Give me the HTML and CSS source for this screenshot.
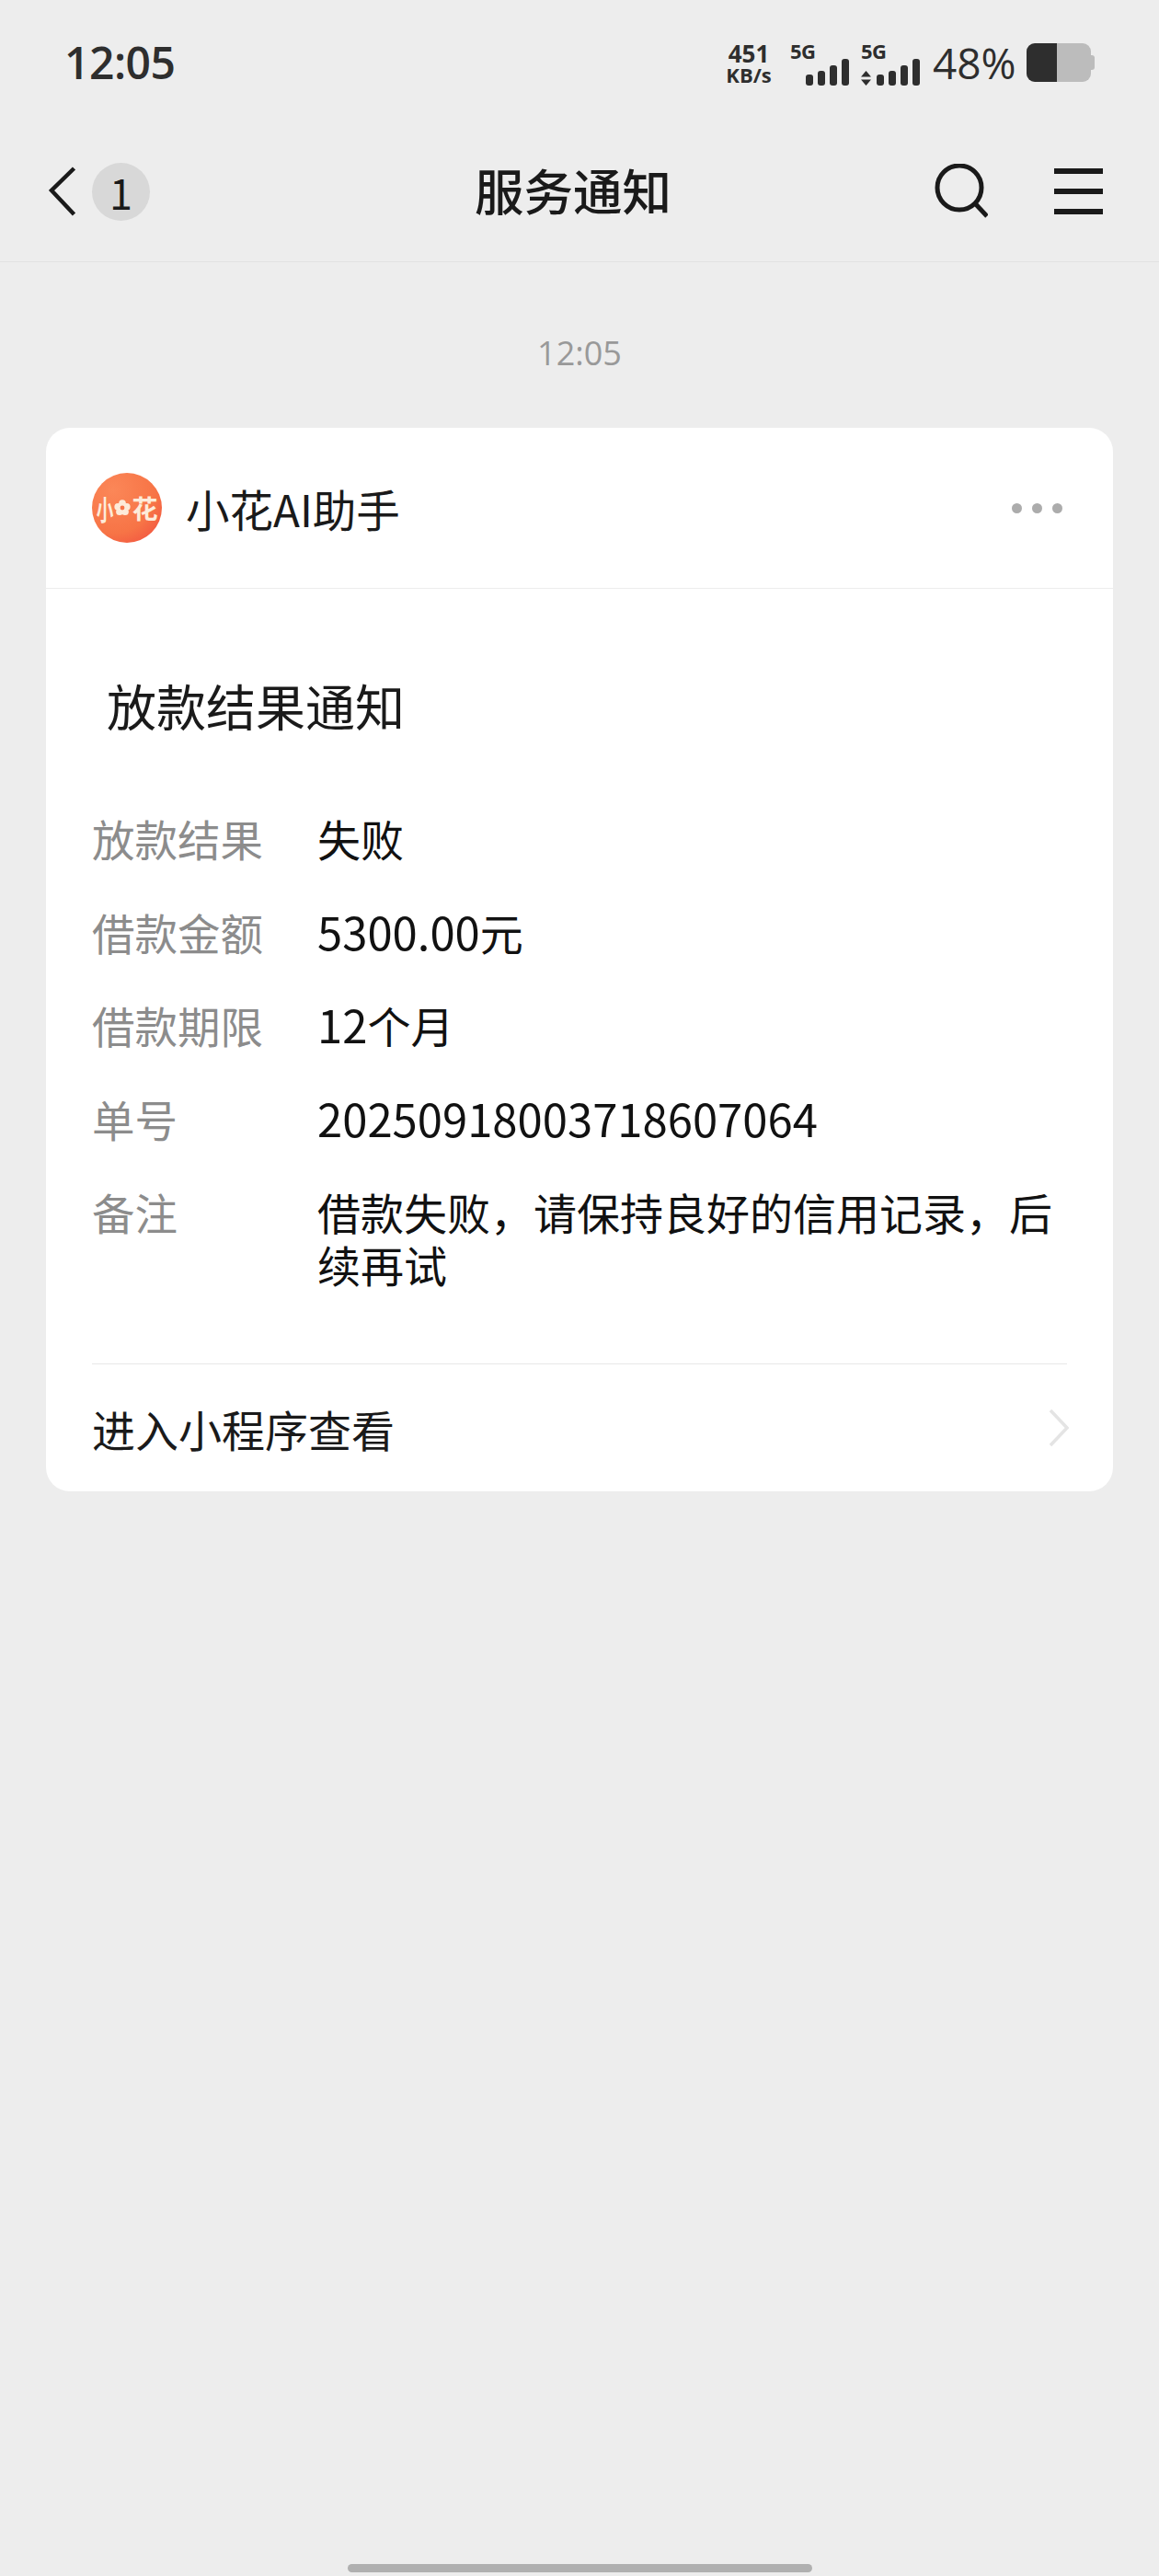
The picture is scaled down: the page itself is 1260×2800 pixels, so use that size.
FILE: index.html
```html
<!DOCTYPE html>
<html lang="zh-CN">
<head>
  <meta charset="UTF-8">
  <meta name="viewport" content="width=device-width, initial-scale=1.0">
  <title>服务通知</title>
  <link rel="stylesheet" href="styles.css">
</head>
<body>
  <div class="status-bar">
    <div class="status-time">12:05</div>
    <div class="status-right">
      <div class="net-speed">
        <div class="net-value">451</div>
        <div class="net-unit">KB/s</div>
      </div>
      <div class="signal">
        <div class="signal-label">5G</div>
        <div class="signal-row">
          <div class="bars">
            <span class="bar bar-1"></span>
            <span class="bar bar-2"></span>
            <span class="bar bar-3"></span>
            <span class="bar bar-4"></span>
          </div>
        </div>
      </div>
      <div class="signal signal-data">
        <div class="signal-label">5G</div>
        <div class="signal-row">
          <svg class="updown" width="11" height="16" viewBox="0 0 11 16"><path d="M5.5 0L11 6.5H0ZM0 9.500H11L5.5 16Z" fill="#2e2e2e"/></svg>
          <div class="bars">
            <span class="bar bar-1"></span>
            <span class="bar bar-2"></span>
            <span class="bar bar-3"></span>
            <span class="bar bar-4"></span>
          </div>
        </div>
      </div>
      <div class="battery-text">48%</div>
      <div class="battery">
        <div class="battery-body"><div class="battery-level"></div></div>
        <div class="battery-nub"></div>
      </div>
    </div>
  </div>

  <div class="nav">
    <div class="nav-left">
      <svg class="back-icon" width="30" height="54" viewBox="0 0 30 54"><path d="M27.500 2L3 26L27.500 52" fill="none" stroke="#1a1a1a" stroke-width="4.500"/></svg>
      <div class="badge">1</div>
    </div>
    <div class="nav-title">服务通知</div>
    <div class="nav-right">
      <svg class="search-icon" width="58" height="60" viewBox="0 0 58 60"><circle cx="27" cy="26" r="24" fill="none" stroke="#1a1a1a" stroke-width="5"/><path d="M43 42L57 57" fill="none" stroke="#1a1a1a" stroke-width="5"/></svg>
      <div class="menu-icon">
        <span></span>
        <span></span>
        <span></span>
      </div>
    </div>
  </div>

  <div class="chat">
    <div class="chat-time">12:05</div>

    <div class="card">
      <div class="card-head">
        <div class="logo">
          <span class="logo-char logo-char-narrow">小</span>
          <svg class="logo-flower" width="18" height="18" viewBox="0 0 15 15"><g fill="#fdebd9"><circle cx="7.500" cy="3.500" r="3.200"/><circle cx="3.500" cy="6.500" r="3.200"/><circle cx="11.500" cy="6.500" r="3.200"/><circle cx="5" cy="11" r="3.200"/><circle cx="10" cy="11" r="3.200"/></g><circle cx="7.500" cy="7.500" r="2" fill="#f7754a"/></svg>
          <span class="logo-char">花</span>
        </div>
        <div class="card-name">小花AI助手</div>
        <div class="more">
          <span></span>
          <span></span>
          <span></span>
        </div>
      </div>

      <div class="card-body">
        <div class="notice-title">放款结果通知</div>
        <div class="rows">
          <div class="row">
            <div class="row-label">放款结果</div>
            <div class="row-value">失败</div>
          </div>
          <div class="row">
            <div class="row-label">借款金额</div>
            <div class="row-value"><span class="num">5300.00</span>元</div>
          </div>
          <div class="row">
            <div class="row-label">借款期限</div>
            <div class="row-value"><span class="num">12</span>个月</div>
          </div>
          <div class="row">
            <div class="row-label">单号</div>
            <div class="row-value"><span class="num">20250918003718607064</span></div>
          </div>
          <div class="row">
            <div class="row-label">备注</div>
            <div class="row-value">借款失败，请保持良好的信用记录，后续再试</div>
          </div>
        </div>
      </div>

      <div class="card-foot">
        <div class="foot-text">进入小程序查看</div>
        <svg class="foot-arrow" width="22" height="42" viewBox="0 0 22 42"><path d="M2 2L20 21L2 40" fill="none" stroke="#e4e4e4" stroke-width="3.500"/></svg>
      </div>
    </div>
  </div>

  <div class="home-bar"></div>
</body>
</html>
```

FILE: styles.css
```css
body {
  width: 1260px;
  height: 2800px;
  margin: 0;
  padding: 0;
  display: flex;
  flex-direction: column;
  overflow: hidden;
  background: rgb(237, 237, 237);
  color: rgb(26, 26, 26);
  font-family: "Noto Sans CJK SC", "Noto Sans", sans-serif;
}

.status-bar {
  height: 132px;
  box-sizing: border-box;
  padding: 47px 70px 0 70px;
  display: flex;
  justify-content: space-between;
  align-items: flex-start;
  color: rgb(46, 46, 46);
}

.status-time {
  font-family: "Open Sans", sans-serif;
  font-size: 48px;
  font-weight: 600;
  line-height: 42px;
  letter-spacing: -0.5px;
}

.status-right {
  display: flex;
  align-items: flex-start;
}

.net-speed {
  width: 50px;
  margin-right: 20px;
  text-align: center;
  font-family: "Open Sans", sans-serif;
  font-weight: 700;
}

.net-value {
  font-size: 26px;
  line-height: 22px;
}

.net-unit {
  font-size: 22px;
  line-height: 24px;
  margin: 0 -4px;
}

.signal {
  width: 64px;
  height: 42px;
  margin-right: 13px;
  display: flex;
  flex-direction: column;
}

.signal-data {
  margin-right: 14px;
}

.signal-label {
  font-family: "Open Sans", sans-serif;
  font-size: 22px;
  font-weight: 700;
  line-height: 17px;
  letter-spacing: -0.5px;
  margin-right: auto;
}

.signal-row {
  flex: 1;
  display: flex;
  justify-content: flex-end;
  align-items: flex-end;
}

.updown {
  margin-right: auto;
}

.bars {
  display: flex;
  align-items: flex-end;
  gap: 5px;
}

.bar {
  width: 8px;
  background: rgb(46, 46, 46);
  border-radius: 3px;
}

.bar-1 { height: 12px; }
.bar-2 { height: 16px; }
.bar-3 { height: 22px; }
.bar-4 { height: 29px; }

.battery-text {
  width: 102px;
  font-family: "Open Sans", sans-serif;
  font-size: 46px;
  line-height: 42px;
}

.battery {
  display: flex;
  align-items: center;
}

.battery-body {
  width: 70px;
  height: 42px;
  background: rgb(188, 188, 188);
  border-radius: 9px;
  overflow: hidden;
}

.battery-level {
  width: 33px;
  height: 100%;
  background: rgb(46, 46, 46);
}

.battery-nub {
  width: 4px;
  height: 16px;
  background: rgb(188, 188, 188);
  border-radius: 0 3px 3px 0;
}

.nav {
  height: 153px;
  box-sizing: border-box;
  padding-left: 53px;
  display: grid;
  grid-template-columns: 463px auto 1fr;
  align-items: center;
  border-bottom: 1px solid rgb(226, 226, 226);
}

.nav-left {
  display: flex;
  align-items: center;
  gap: 17px;
}

.badge {
  width: 63px;
  height: 63px;
  border-radius: 50%;
  background: rgb(216, 216, 216);
  display: flex;
  align-items: center;
  justify-content: center;
  font-size: 45px;
}

.nav-title {
  padding-bottom: 3px;
  font-size: 53.500px;
  font-weight: 500;
  line-height: 1.2;
}

.nav-right {
  padding-right: 61px;
  display: flex;
  justify-content: flex-end;
  align-items: center;
  gap: 72px;
}

.menu-icon {
  width: 53px;
  display: flex;
  flex-direction: column;
  gap: 16px;
}

.menu-icon span {
  height: 6px;
  background: rgb(26, 26, 26);
}

.chat {
  padding: 0 50px;
}

.chat-time {
  padding-top: 74px;
  margin-bottom: 56px;
  text-align: center;
  font-family: "Open Sans", sans-serif;
  font-size: 36px;
  line-height: 50px;
  color: rgb(153, 153, 153);
}

.card {
  background: white;
  border-radius: 26px;
}

.card-head {
  height: 175px;
  box-sizing: border-box;
  padding: 0 55px 0 50px;
  display: flex;
  align-items: center;
  border-bottom: 1px solid rgb(236, 236, 236);
}

.logo {
  width: 76px;
  height: 76px;
  border-radius: 50%;
  background: radial-gradient(circle at 30% 25%, rgb(251, 135, 88) 0%, rgb(247, 116, 70) 60%, rgb(240, 72, 62) 100%);
  display: flex;
  align-items: center;
  justify-content: center;
}

.logo-char {
  font-size: 28px;
  font-weight: 700;
  line-height: 1;
  color: rgb(253, 235, 217);
}

.logo-char-narrow {
  font-size: 30px;
  margin: 0 -6px 0 -5px;
  transform: scaleX(0.62);
}

.logo-flower {
  margin: 0 1px;
  flex-shrink: 0;
}

.card-name {
  margin-left: 26px;
  font-size: 47.500px;
}

.more {
  margin-left: auto;
  display: flex;
  gap: 11px;
}

.more span {
  width: 11px;
  height: 11px;
  border-radius: 50%;
  background: rgb(172, 172, 172);
}

.card-body {
  padding: 96px 50px 0;
}

.notice-title {
  padding-left: 16px;
  margin-bottom: 84px;
  font-size: 54px;
  line-height: 62px;
}

.rows {
  display: flex;
  flex-direction: column;
  gap: 44.500px;
}

.row {
  display: flex;
  font-size: 47px;
  line-height: 57px;
}

.row-label {
  width: 245px;
  flex-shrink: 0;
  font-size: 46.500px;
  color: rgb(140, 140, 140);
}

.row-value {
  flex: 1;
  padding-right: 15px;
  color: rgb(17, 17, 17);
}

.num {
  font-size: 49px;
  line-height: 1;
}

.card-foot {
  height: 139px;
  margin: 80px 50px 0;
  box-sizing: border-box;
  display: flex;
  justify-content: space-between;
  align-items: center;
  border-top: 1px solid rgb(232, 232, 232);
}

.foot-text {
  font-size: 47px;
}

.foot-arrow {
  margin-right: -2px;
}

.home-bar {
  width: 505px;
  height: 9px;
  margin: auto auto 4px;
  border-radius: 5px;
  background: rgb(176, 176, 176);
}
```
